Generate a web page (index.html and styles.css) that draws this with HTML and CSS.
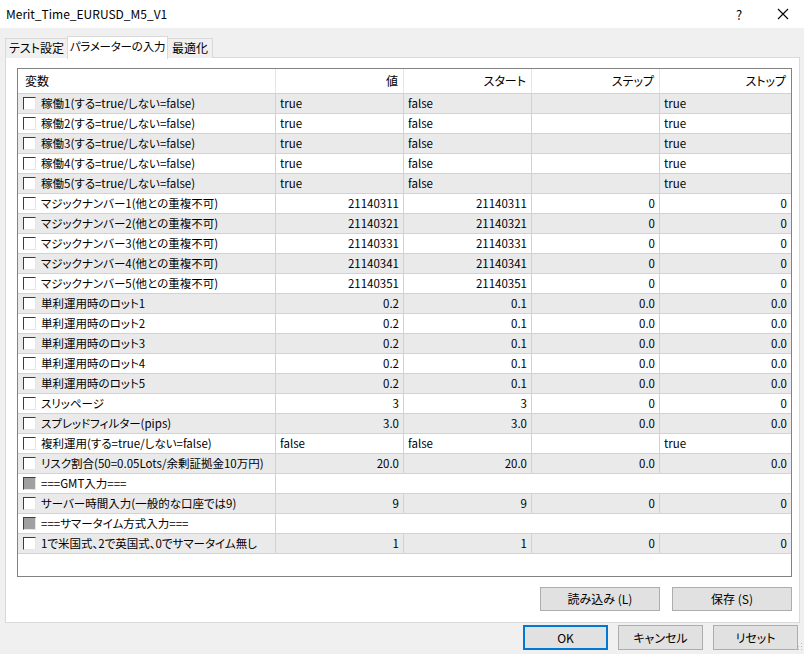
FILE: index.html
```html
<!DOCTYPE html>
<html lang="ja">
<head>
<meta charset="utf-8">
<title>Merit_Time_EURUSD_M5_V1</title>
<link rel="stylesheet" href="styles.css">
</head>
<body>
<div class="window">
  <div class="titlebar">
    <span class="title">Merit_Time_EURUSD_M5_V1</span>
    <span class="help">?</span>
    <span class="close"><svg width="12" height="12" viewBox="0 0 12 12"><path d="M1 1 L11 11 M11 1 L1 11" stroke="#000" stroke-width="1.1" fill="none"/></svg></span>
  </div>
  <div class="tabs">
    <div class="tab t1">テスト設定</div>
    <div class="tab active t2">パラメーターの入力</div>
    <div class="tab t3">最適化</div>
  </div>
  <div class="panel">
    <div class="list">
      <div class="row head">
        <div class="cell">変数</div>
        <div class="cell r">値</div>
        <div class="cell r">スタート</div>
        <div class="cell r">ステップ</div>
        <div class="cell r last">ストップ</div>
      </div>
      <div class="row odd"><div class="cell name"><i class="cb"></i>稼働1(する=true/しない=false)</div><div class="cell">true</div><div class="cell">false</div><div class="cell"></div><div class="cell last">true</div></div>
      <div class="row"><div class="cell name"><i class="cb"></i>稼働2(する=true/しない=false)</div><div class="cell">true</div><div class="cell">false</div><div class="cell"></div><div class="cell last">true</div></div>
      <div class="row odd"><div class="cell name"><i class="cb"></i>稼働3(する=true/しない=false)</div><div class="cell">true</div><div class="cell">false</div><div class="cell"></div><div class="cell last">true</div></div>
      <div class="row"><div class="cell name"><i class="cb"></i>稼働4(する=true/しない=false)</div><div class="cell">true</div><div class="cell">false</div><div class="cell"></div><div class="cell last">true</div></div>
      <div class="row odd"><div class="cell name"><i class="cb"></i>稼働5(する=true/しない=false)</div><div class="cell">true</div><div class="cell">false</div><div class="cell"></div><div class="cell last">true</div></div>
      <div class="row"><div class="cell name"><i class="cb"></i>マジックナンバー1(他との重複不可)</div><div class="cell r">21140311</div><div class="cell r">21140311</div><div class="cell r">0</div><div class="cell r last">0</div></div>
      <div class="row odd"><div class="cell name"><i class="cb"></i>マジックナンバー2(他との重複不可)</div><div class="cell r">21140321</div><div class="cell r">21140321</div><div class="cell r">0</div><div class="cell r last">0</div></div>
      <div class="row"><div class="cell name"><i class="cb"></i>マジックナンバー3(他との重複不可)</div><div class="cell r">21140331</div><div class="cell r">21140331</div><div class="cell r">0</div><div class="cell r last">0</div></div>
      <div class="row odd"><div class="cell name"><i class="cb"></i>マジックナンバー4(他との重複不可)</div><div class="cell r">21140341</div><div class="cell r">21140341</div><div class="cell r">0</div><div class="cell r last">0</div></div>
      <div class="row"><div class="cell name"><i class="cb"></i>マジックナンバー5(他との重複不可)</div><div class="cell r">21140351</div><div class="cell r">21140351</div><div class="cell r">0</div><div class="cell r last">0</div></div>
      <div class="row odd"><div class="cell name"><i class="cb"></i>単利運用時のロット1</div><div class="cell r">0.2</div><div class="cell r">0.1</div><div class="cell r">0.0</div><div class="cell r last">0.0</div></div>
      <div class="row"><div class="cell name"><i class="cb"></i>単利運用時のロット2</div><div class="cell r">0.2</div><div class="cell r">0.1</div><div class="cell r">0.0</div><div class="cell r last">0.0</div></div>
      <div class="row odd"><div class="cell name"><i class="cb"></i>単利運用時のロット3</div><div class="cell r">0.2</div><div class="cell r">0.1</div><div class="cell r">0.0</div><div class="cell r last">0.0</div></div>
      <div class="row"><div class="cell name"><i class="cb"></i>単利運用時のロット4</div><div class="cell r">0.2</div><div class="cell r">0.1</div><div class="cell r">0.0</div><div class="cell r last">0.0</div></div>
      <div class="row odd"><div class="cell name"><i class="cb"></i>単利運用時のロット5</div><div class="cell r">0.2</div><div class="cell r">0.1</div><div class="cell r">0.0</div><div class="cell r last">0.0</div></div>
      <div class="row"><div class="cell name"><i class="cb"></i>スリッページ</div><div class="cell r">3</div><div class="cell r">3</div><div class="cell r">0</div><div class="cell r last">0</div></div>
      <div class="row odd"><div class="cell name"><i class="cb"></i>スプレッドフィルター(pips)</div><div class="cell r">3.0</div><div class="cell r">3.0</div><div class="cell r">0.0</div><div class="cell r last">0.0</div></div>
      <div class="row"><div class="cell name"><i class="cb"></i>複利運用(する=true/しない=false)</div><div class="cell">false</div><div class="cell">false</div><div class="cell"></div><div class="cell last">true</div></div>
      <div class="row odd"><div class="cell name"><i class="cb"></i>リスク割合(50=0.05Lots/余剰証拠金10万円)</div><div class="cell r">20.0</div><div class="cell r">20.0</div><div class="cell r">0.0</div><div class="cell r last">0.0</div></div>
      <div class="row sep"><div class="cell name"><i class="cb gray"></i>===GMT入力===</div><div class="cell span last"></div></div>
      <div class="row odd"><div class="cell name"><i class="cb"></i>サーバー時間入力(一般的な口座では9)</div><div class="cell r">9</div><div class="cell r">9</div><div class="cell r">0</div><div class="cell r last">0</div></div>
      <div class="row sep"><div class="cell name"><i class="cb gray"></i>===サマータイム方式入力===</div><div class="cell span last"></div></div>
      <div class="row odd"><div class="cell name"><i class="cb"></i>1で米国式、2で英国式、0でサマータイム無し</div><div class="cell r">1</div><div class="cell r">1</div><div class="cell r">0</div><div class="cell r last">0</div></div>
    </div>
    <div class="panel-buttons">
      <button class="btn wide">読み込み (L)</button>
      <button class="btn wide">保存 (S)</button>
    </div>
  </div>
  <div class="dialog-buttons">
    <button class="btn std default">OK</button>
    <button class="btn std">キャンセル</button>
    <button class="btn std">リセット</button>
  </div>
  <svg class="grip" width="10" height="10" viewBox="0 0 10 10"><g fill="#b8b8b8"><rect x="8" y="0" width="1" height="1"/><rect x="5" y="3" width="1" height="1"/><rect x="8" y="3" width="1" height="1"/><rect x="2" y="6" width="1" height="1"/><rect x="5" y="6" width="1" height="1"/><rect x="8" y="6" width="1" height="1"/></g></svg>
</div>
</body>
</html>
```
FILE: styles.css
```css
* { box-sizing: border-box; }
html, body {
  margin: 0;
  padding: 0;
  background: #f0f0f0;
}
body {
  font-family: "Noto Sans CJK JP", "Noto Sans", sans-serif;
  font-size: 12px;
  color: #000;
  font-feature-settings: "palt";
}
.window {
  position: relative;
  width: 804px;
  height: 654px;
  overflow: hidden;
}
.titlebar {
  height: 28px;
  background: #fff;
  display: flex;
  align-items: center;
  padding-left: 6px;
}
.title {
  flex: 1;
  font-size: 12px;
  line-height: 16px;
  font-feature-settings: normal;
}
.help {
  width: 16px;
  text-align: center;
  font-size: 13px;
  margin-right: 30px;
}
.close {
  width: 12px;
  height: 12px;
  margin-right: 15px;
  display: flex;
}
.tabs {
  display: flex;
  align-items: flex-end;
  height: 29px;
  padding-left: 5px;
  position: relative;
  z-index: 1;
}
.tab {
  height: 20px;
  line-height: 18px;
  border: 1px solid #d9d9d9;
  border-bottom: none;
  background: #f0f0f0;
  text-align: center;
  margin-bottom: -1px;
  white-space: nowrap;
  overflow: hidden;
}
.tab.t1 { width: 63px; }
.tab.t2 { width: 101px; margin-left: -1px; font-size: 11.5px; letter-spacing: -0.2px; }
.tab.t3 { width: 46px; margin-left: -1px; }
.tab.active {
  height: 23px;
  line-height: 19px;
  background: #fff;
  margin-bottom: -2px;
  position: relative;
  z-index: 1;
}
.panel {
  margin-left: 5px;
  width: 795px;
  height: 566px;
  background: #fff;
  border: 1px solid #d9d9d9;
  padding: 10px 7px 0 11px;
}
.list {
  width: 775px;
  height: 509px;
  border: 1px solid #828282;
  background: #fff;
  font-size: 11.5px;
}
.row {
  display: grid;
  grid-template-columns: 258px 128px 128px 128px 131px;
  height: 20px;
}
.row.odd { background: #eaeaea; }
.row.sep { grid-template-columns: 258px 515px; }
.row.head {
  height: 25px;
  background: #fff;
  font-size: 12px;
}
.cell {
  height: 20px;
  line-height: 19px;
  border-right: 1px solid #d2d2d2;
  border-bottom: 1px solid #d2d2d2;
  padding: 0 4px;
  white-space: nowrap;
  overflow: hidden;
}
.cell.r { text-align: right; }
.cell.last { border-right: none; }
.head .cell {
  height: 25px;
  line-height: 24px;
  border-right-color: #e5e5e5;
  border-bottom-color: #d2d2d2;
  padding: 0 5px 0 7px;
}
.head .cell.r { padding-right: 5px; }
.cell.name {
  display: flex;
  align-items: center;
  padding-left: 5px;
}
.cb {
  display: inline-block;
  width: 13px;
  height: 13px;
  margin-right: 5px;
  background: #fff;
  border-top: 1px solid #3c3c3c;
  border-left: 1px solid #3c3c3c;
  border-right: 1px solid #e6e6e6;
  border-bottom: 1px solid #e6e6e6;
  flex: none;
}
.cb.gray {
  background: #a0a0a0;
}
.panel-buttons {
  display: flex;
  justify-content: flex-end;
  gap: 12px;
  margin-top: 10px;
}
.btn {
  font-family: inherit;
  font-size: 12px;
  font-feature-settings: "palt";
  color: #000;
  background: #e1e1e1;
  border: 1px solid #adadad;
  height: 24px;
  padding: 0;
  line-height: 20px;
}
.btn.wide { width: 120px; }
.dialog-buttons {
  display: flex;
  justify-content: flex-end;
  gap: 10px;
  margin-top: 2px;
  padding-right: 6px;
}
.btn.std { width: 85px; height: 25px; }
.btn.default { border: 2px solid #0078d7; }
.grip {
  position: absolute;
  right: 1px;
  bottom: 1px;
}
```
